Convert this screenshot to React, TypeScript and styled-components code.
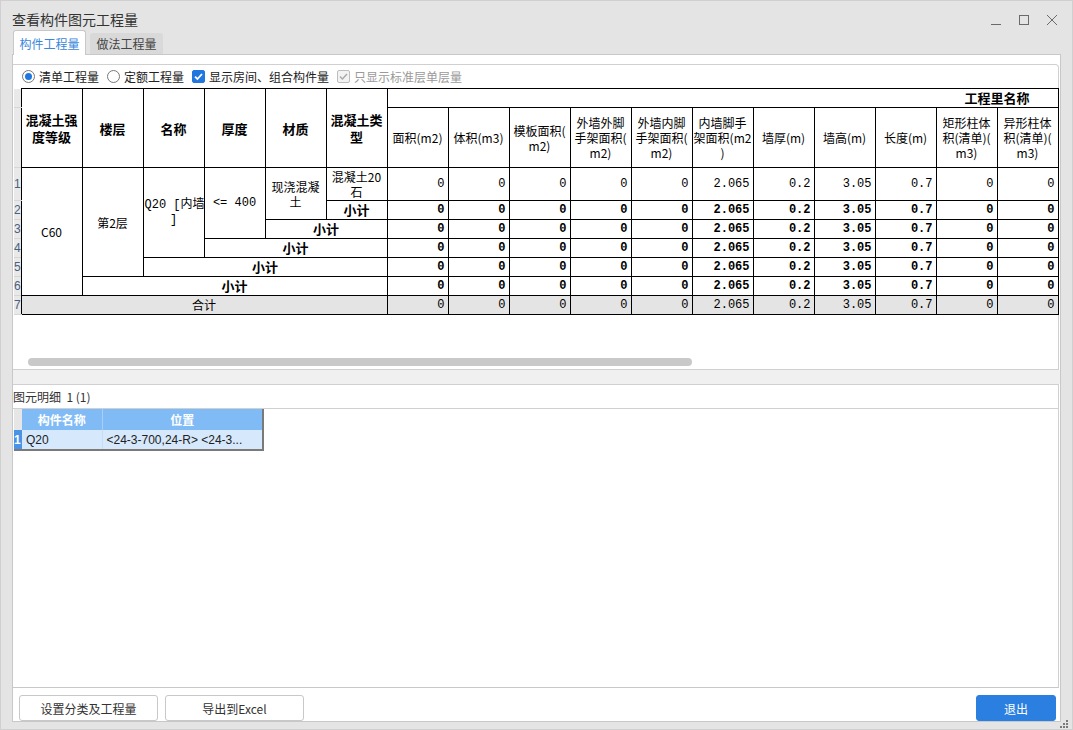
import React from "react";
import styled, { createGlobalStyle } from "styled-components";

const GlobalStyle = createGlobalStyle`
  * { box-sizing: border-box; }
  html, body { margin: 0; padding: 0; }
  body {
    background: #e4e4e4;
    font-family: "Noto Sans CJK SC", "Noto Sans", sans-serif;
    color: #222;
  }
`;

const qtyHeaders: string[][] = [
  ["面积(m2)"],
  ["体积(m3)"],
  ["模板面积(", "m2)"],
  ["外墙外脚", "手架面积(", "m2)"],
  ["外墙内脚", "手架面积(", "m2)"],
  ["内墙脚手", "架面积(m2", ")"],
  ["墙厚(m)"],
  ["墙高(m)"],
  ["长度(m)"],
  ["矩形柱体", "积(清单)(", "m3)"],
  ["异形柱体", "积(清单)(", "m3)"],
];

const values = ["0", "0", "0", "0", "0", "2.065", "0.2", "3.05", "0.7", "0", "0"];

const App: React.FC = () => {
  const renderValues = (bold: boolean, total = false) =>
    values.map((v, i) => (
      <NumCell key={i} $bold={bold} $total={total}>
        {v}
      </NumCell>
    ));

  return (
    <>
      <GlobalStyle />
      <Window>
        <TitleBar>
          <Title>查看构件图元工程量</Title>
          <WinControls>
            <svg width="12" height="12" viewBox="0 0 12 12">
              <line x1="1" y1="10.5" x2="11" y2="10.5" stroke="#6a6a6a" strokeWidth="1" />
            </svg>
            <svg width="12" height="12" viewBox="0 0 12 12">
              <rect x="1.5" y="1.5" width="9" height="9" fill="none" stroke="#6a6a6a" strokeWidth="1" />
            </svg>
            <svg width="12" height="12" viewBox="0 0 12 12">
              <path d="M1 1 L11 11 M11 1 L1 11" stroke="#6a6a6a" strokeWidth="1" />
            </svg>
          </WinControls>
        </TitleBar>

        <TabsRow>
          <Tab $active>构件工程量</Tab>
          <Tab>做法工程量</Tab>
        </TabsRow>

        <MainPanel>
          <UpperFrame>
            <OptionsRow>
              <Option>
                <Radio $checked />
                清单工程量
              </Option>
              <Option>
                <Radio />
                定额工程量
              </Option>
              <Option>
                <CheckBox>
                  <svg width="11" height="11" viewBox="0 0 11 11">
                    <path d="M2 5.6 L4.4 8 L9 3" fill="none" stroke="#fff" strokeWidth="1.8" />
                  </svg>
                </CheckBox>
                显示房间、组合构件量
              </Option>
              <Option $disabled>
                <CheckBox $disabled>
                  <svg width="11" height="11" viewBox="0 0 11 11">
                    <path d="M2 5.6 L4.4 8 L9 3" fill="none" stroke="#a8a8a8" strokeWidth="1.4" />
                  </svg>
                </CheckBox>
                只显示标准层单层量
              </Option>
            </OptionsRow>

            <TableClip>
              <QtyTable>
                <colgroup>
                  <col style={{ width: 7 }} />
                  {Array.from({ length: 17 }).map((_, i) => (
                    <col key={i} style={{ width: 61 }} />
                  ))}
                </colgroup>
                <tbody>
                  <Row $h={19}>
                    <GutterCell />
                    <HeadCell rowSpan={2}>混凝土强<br />度等级</HeadCell>
                    <HeadCell rowSpan={2}>楼层</HeadCell>
                    <HeadCell rowSpan={2}>名称</HeadCell>
                    <HeadCell rowSpan={2}>厚度</HeadCell>
                    <HeadCell rowSpan={2}>材质</HeadCell>
                    <HeadCell rowSpan={2}>混凝土类<br />型</HeadCell>
                    <GroupHead colSpan={11}>工程里名称</GroupHead>
                  </Row>
                  <Row $h={60}>
                    <GutterCell />
                    {qtyHeaders.map((lines, i) => (
                      <QtyHead key={i}>
                        {lines.map((l, j) => (
                          <React.Fragment key={j}>
                            {j > 0 && <br />}
                            {l}
                          </React.Fragment>
                        ))}
                      </QtyHead>
                    ))}
                  </Row>

                  <Row $h={33}>
                    <GutterCell>1</GutterCell>
                    <TextCell rowSpan={6}>C60</TextCell>
                    <TextCell rowSpan={5}>第2层</TextCell>
                    <TextCell rowSpan={4} $mono>Q20 [内墙<br />]</TextCell>
                    <TextCell rowSpan={3} $mono>&lt;= 400</TextCell>
                    <TextCell rowSpan={2}>现浇混凝<br />土</TextCell>
                    <TextCell>混凝土20<br />石</TextCell>
                    {renderValues(false)}
                  </Row>
                  <Row $h={19}>
                    <GutterCell>2</GutterCell>
                    <SubTotal>小计</SubTotal>
                    {renderValues(true)}
                  </Row>
                  <Row $h={19}>
                    <GutterCell>3</GutterCell>
                    <SubTotal colSpan={2}>小计</SubTotal>
                    {renderValues(true)}
                  </Row>
                  <Row $h={19}>
                    <GutterCell>4</GutterCell>
                    <SubTotal colSpan={3}>小计</SubTotal>
                    {renderValues(true)}
                  </Row>
                  <Row $h={19}>
                    <GutterCell>5</GutterCell>
                    <SubTotal colSpan={4}>小计</SubTotal>
                    {renderValues(true)}
                  </Row>
                  <Row $h={19}>
                    <GutterCell>6</GutterCell>
                    <SubTotal colSpan={5}>小计</SubTotal>
                    {renderValues(true)}
                  </Row>
                  <Row $h={19}>
                    <GutterCell>7</GutterCell>
                    <GrandTotal colSpan={6}>合计</GrandTotal>
                    {renderValues(false, true)}
                  </Row>
                </tbody>
              </QtyTable>
            </TableClip>

            <ScrollThumb />
          </UpperFrame>

          <Band />

          <DetailFrame>
            <DetailLabel>图元明细&nbsp;&nbsp;1 (1)</DetailLabel>
            <DetailTable>
              <colgroup>
                <col style={{ width: 8 }} />
                <col style={{ width: 80 }} />
                <col style={{ width: 161 }} />
              </colgroup>
              <tbody>
                <tr>
                  <DetailGutter />
                  <DetailHead>构件名称</DetailHead>
                  <DetailHead $last>位置</DetailHead>
                </tr>
                <tr>
                  <DetailGutter $selected>1</DetailGutter>
                  <DetailCell>Q20</DetailCell>
                  <DetailCell $last>&lt;24-3-700,24-R&gt; &lt;24-3...</DetailCell>
                </tr>
              </tbody>
            </DetailTable>
          </DetailFrame>

          <ButtonBar>
            <Button>设置分类及工程量</Button>
            <Button>导出到Excel</Button>
            <Spacer />
            <Button $primary>退出</Button>
          </ButtonBar>
        </MainPanel>

        <Grip>
          <svg width="10" height="8" viewBox="0 0 10 8">
            <rect x="7" y="0" width="2" height="2" fill="#7a7a7a" />
            <rect x="4" y="3" width="2" height="2" fill="#7a7a7a" />
            <rect x="7" y="3" width="2" height="2" fill="#7a7a7a" />
            <rect x="1" y="6" width="2" height="2" fill="#7a7a7a" />
            <rect x="4" y="6" width="2" height="2" fill="#7a7a7a" />
            <rect x="7" y="6" width="2" height="2" fill="#7a7a7a" />
          </svg>
        </Grip>
      </Window>
    </>
  );
};

export default App;

const Window = styled.div`
    position: relative;
    width: 1073px;
    height: 730px;
    background: #e4e4e4;
    border: 1px solid #d0d0d0;
    display: flex;
    flex-direction: column;
    overflow: hidden;
`;

const TitleBar = styled.div`
    height: 30px;
    display: flex;
    align-items: flex-start;
    padding: 9px 0 0 11px;
`;

const Title = styled.div`
    font-size: 14px;
    line-height: 18px;
    color: #333;
`;

const WinControls = styled.div`
    margin-left: auto;
    margin-right: 14px;
    margin-top: 4px;
    display: flex;
    gap: 16px;
`;

const TabsRow = styled.div`
    height: 23px;
    display: flex;
    align-items: flex-end;
    gap: 4px;
    padding-left: 12px;
`;

const Tab = styled.div<{ $active?: boolean }>`
    width: 73px;
    height: ${p => (p.$active ? "25px" : "21px")};
    margin-bottom: ${p => (p.$active ? "-1px" : "0")};
    position: relative;
    z-index: 1;
    display: flex;
    align-items: center;
    justify-content: center;
    font-size: 12px;
    color: ${p => (p.$active ? "#3a86dc" : "#444")};
    background: ${p => (p.$active ? "#fff" : "#d9d9d9")};
    border: ${p => (p.$active ? "1px solid #c8c8c8" : "none")};
    border-bottom: none;
    border-radius: 3px 3px 0 0;
`;

const MainPanel = styled.div`
    margin-left: 11px;
    width: 1049px;
    height: 668px;
    background: #fff;
    border: 1px solid #c8c8c8;
    display: flex;
    flex-direction: column;
`;

const UpperFrame = styled.div`
    margin-top: 9px;
    margin-right: 1px;
    height: 306px;
    border: 1px solid #d0d0d0;
    border-left: none;
    border-radius: 0 4px 0 0;
    display: flex;
    flex-direction: column;
    padding-left: 1px;
`;

const OptionsRow = styled.div`
    height: 23px;
    display: flex;
    align-items: center;
    gap: 8px;
    padding-left: 8px;
    font-size: 12px;
`;

const Option = styled.label<{ $disabled?: boolean }>`
    display: flex;
    align-items: center;
    gap: 4px;
    color: ${p => (p.$disabled ? "#9a9a9a" : "#222")};
    white-space: nowrap;
`;

const Radio = styled.span<{ $checked?: boolean }>`
    width: 13px;
    height: 13px;
    border-radius: 50%;
    border: 1px solid #777;
    background: #fff;
    display: flex;
    align-items: center;
    justify-content: center;
    &::after {
        content: "";
        width: 7px;
        height: 7px;
        border-radius: 50%;
        background: ${p => (p.$checked ? "#1e78e0" : "transparent")};
    }
`;

const CheckBox = styled.span<{ $disabled?: boolean }>`
    width: 13px;
    height: 13px;
    border-radius: 2px;
    display: flex;
    align-items: center;
    justify-content: center;
    background: ${p => (p.$disabled ? "#f3f3f3" : "#2277df")};
    border: 1px solid ${p => (p.$disabled ? "#bdbdbd" : "#2277df")};
`;

const TableClip = styled.div`
    width: 1045px;
    overflow: hidden;
`;

const QtyTable = styled.table`
    border-collapse: collapse;
    table-layout: fixed;
    width: 1044px;
    color: #000;
    line-height: 14px;
`;

const Row = styled.tr<{ $h: number }>`
    height: ${p => p.$h}px;
`;

const GutterCell = styled.td`
    padding: 0;
    border: none;
    border-bottom: 1px solid #d6d6d6;
    background: #e9e9e9;
    font-family: "Liberation Sans", sans-serif;
    font-size: 12px;
    line-height: 14px;
    color: #4b5f80;
    overflow: hidden;
    white-space: nowrap;
    text-align: left;
    vertical-align: middle;
`;

const HeadCell = styled.th`
    border: 1px solid #000;
    padding: 0;
    font-size: 13px;
    line-height: 17px;
    font-weight: bold;
    text-align: center;
    vertical-align: middle;
`;

const GroupHead = styled.th`
    border: 1px solid #000;
    padding: 0 28px 0 0;
    font-size: 13px;
    line-height: 14px;
    font-weight: bold;
    text-align: right;
    vertical-align: middle;
`;

const QtyHead = styled.th`
    border: 1px solid #000;
    padding: 0;
    font-size: 12px;
    line-height: 15px;
    font-weight: normal;
    text-align: center;
    vertical-align: middle;
    white-space: nowrap;
    overflow: hidden;
`;

const TextCell = styled.td<{ $mono?: boolean }>`
    border: 1px solid #000;
    padding: 0 1px;
    font-family: ${p => (p.$mono ? `"Liberation Mono", "Noto Sans CJK SC", monospace` : `"Noto Sans CJK SC", sans-serif`)};
    font-size: 12px;
    line-height: 15px;
    text-align: center;
    vertical-align: middle;
    white-space: nowrap;
`;

const SubTotal = styled.td`
    border: 1px solid #000;
    padding: 0;
    font-size: 13px;
    line-height: 14px;
    font-weight: bold;
    text-align: center;
    vertical-align: middle;
`;

const GrandTotal = styled.td`
    border: 1px solid #000;
    padding: 0;
    font-size: 12px;
    line-height: 14px;
    text-align: center;
    vertical-align: middle;
    background: #e4e4e4;
`;

const NumCell = styled.td<{ $bold?: boolean; $total?: boolean }>`
    border: 1px solid #000;
    padding: 0 3px 0 0;
    font-family: "Liberation Mono", monospace;
    font-size: 12px;
    line-height: 14px;
    font-weight: ${p => (p.$bold ? "bold" : "normal")};
    background: ${p => (p.$total ? "#e4e4e4" : "#fff")};
    text-align: right;
    vertical-align: middle;
`;

const ScrollThumb = styled.div`
    margin-top: auto;
    margin-bottom: 3px;
    margin-left: 14px;
    width: 664px;
    height: 8px;
    border-radius: 4px;
    background: #c9c9c9;
`;

const Band = styled.div`
    height: 14px;
    background: #f0f0f0;
`;

const DetailFrame = styled.div`
    height: 304px;
    margin-right: 1px;
    border-top: 1px solid #d0d0d0;
    border-bottom: 1px solid #c8c8c8;
    border-right: 1px solid #d0d0d0;
    padding-left: 1px;
`;

const DetailLabel = styled.div`
    height: 24px;
    display: flex;
    align-items: center;
    font-size: 12px;
    color: #333;
    border-bottom: 1px solid #d0d0d0;
    margin-left: -1px;
`;

const DetailTable = styled.table`
    border-collapse: collapse;
    table-layout: fixed;
    width: 249px;
    font-size: 12px;
    line-height: 14px;
`;

const DetailGutter = styled.td<{ $selected?: boolean }>`
    padding: 0;
    background: ${p => (p.$selected ? "#4a94e8" : "#e6e6e6")};
    color: #fff;
    font-weight: bold;
    font-family: "Liberation Sans", sans-serif;
    overflow: hidden;
    white-space: nowrap;
    border-bottom: ${p => (p.$selected ? "2px solid #7a7a7a" : "none")};
`;

const DetailHead = styled.th<{ $last?: boolean }>`
    height: 21px;
    padding: 0;
    background: #81bbf6;
    color: #fff;
    font-weight: bold;
    font-size: 12px;
    text-align: center;
    border-right: 1px solid ${p => (p.$last ? "#7a7a7a" : "#a7cef6")};
    border-right-width: ${p => (p.$last ? "2px" : "1px")};
`;

const DetailCell = styled.td<{ $last?: boolean }>`
    height: 20px;
    padding: 0 0 0 4px;
    background: #d6e9fc;
    color: #222;
    text-align: left;
    white-space: nowrap;
    overflow: hidden;
    font-family: "Liberation Sans", "Noto Sans CJK SC", sans-serif;
    border-bottom: 2px solid #7a7a7a;
    border-right: ${p => (p.$last ? "2px solid #7a7a7a" : "1px solid #c6dcf2")};
`;

const ButtonBar = styled.div`
    flex: 1;
    display: flex;
    align-items: flex-start;
    gap: 7px;
    padding: 7px 4px 0 6px;
`;

const Spacer = styled.div`
    flex: 1;
`;

const Button = styled.button<{ $primary?: boolean }>`
    width: ${p => (p.$primary ? "80px" : "139px")};
    height: 26px;
    border-radius: 3px;
    border: 1px solid ${p => (p.$primary ? "#2b7fe0" : "#c8c8c8")};
    background: ${p => (p.$primary ? "#2b7fe0" : "#fff")};
    color: ${p => (p.$primary ? "#fff" : "#333")};
    font-family: "Noto Sans CJK SC", sans-serif;
    font-size: 12px;
    padding: 0;
    cursor: pointer;
`;

const Grip = styled.div`
    position: absolute;
    right: 3px;
    bottom: 1px;
    display: flex;
`;
